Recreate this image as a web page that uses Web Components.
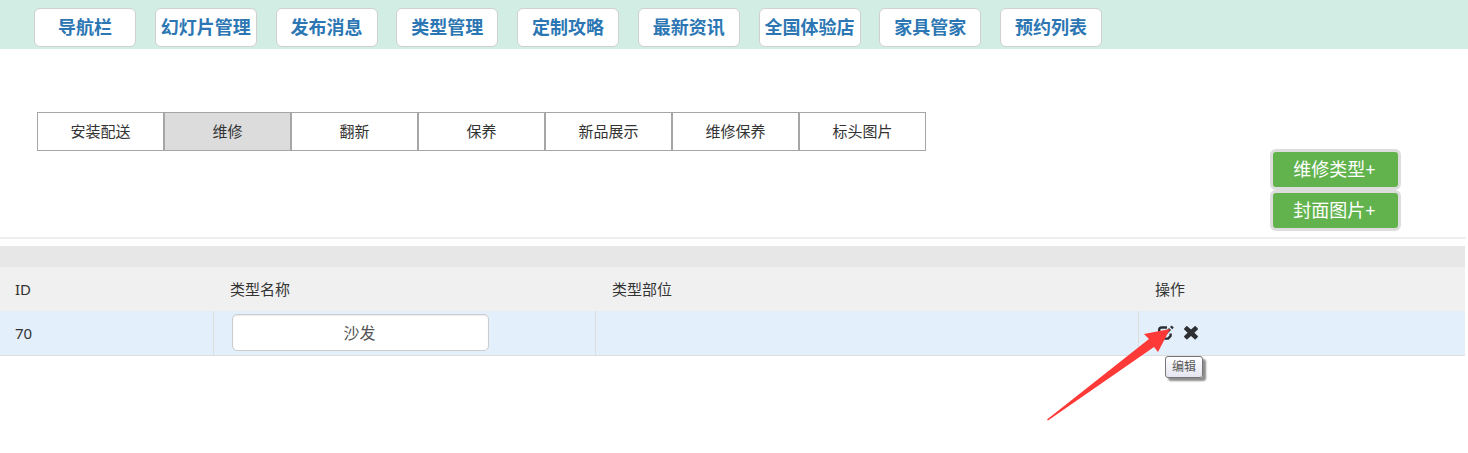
<!DOCTYPE html>
<html lang="zh-CN">
<head>
<meta charset="utf-8">
<title>维修</title>
<style>
  html { height: 100%; }
  body {
    margin: 0;
    min-height: 100vh;
    background: #fff;
    color: #333;
    font: 15px/20px "Noto Sans", "Noto Sans CJK SC", sans-serif;
  }
</style>
</head>
<body>
<admin-page></admin-page>

<script>
class NavButton extends HTMLElement {
  constructor() {
    super();
    this.attachShadow({ mode: "open" });
    this.shadowRoot.innerHTML = `
      <style>
        :host { display: block; width: 102px; }
        a {
          display: block;
          box-sizing: border-box;
          height: 39px;
          border: 1px solid #d0d0d0;
          border-radius: 6px;
          background: #fff;
          color: #2c77b3;
          font-size: 18px;
          font-weight: bold;
          line-height: 36px;
          text-align: center;
          text-decoration: none;
          white-space: nowrap;
        }
      </style>
      <a href="#"><slot></slot></a>
    `;
  }
}
customElements.define("nav-button", NavButton);

class TopNav extends HTMLElement {
  constructor() {
    super();
    this.attachShadow({ mode: "open" });
    this.shadowRoot.innerHTML = `
      <style>
        :host { display: block; background: #d1ede4; padding: 8px 34px 2px; }
        nav {
          display: flex;
          justify-content: space-between;
          max-width: 1068px;
        }
      </style>
      <nav><slot></slot></nav>
    `;
  }
}
customElements.define("top-nav", TopNav);

class TabItem extends HTMLElement {
  constructor() {
    super();
    this.attachShadow({ mode: "open" });
    this.shadowRoot.innerHTML = `
      <style>
        :host { display: block; width: 127px; }
        button {
          display: block;
          width: 100%;
          height: 39px;
          margin: 0;
          padding: 0 0 2px;
          border: 1px solid #a7a5a6;
          background: #fff;
          color: inherit;
          font: inherit;
          cursor: pointer;
        }
        :host([active]) button { background: #dcdcdc; }
      </style>
      <button type="button"><slot></slot></button>
    `;
  }
}
customElements.define("tab-item", TabItem);

class TabBar extends HTMLElement {
  constructor() {
    super();
    this.attachShadow({ mode: "open" });
    this.shadowRoot.innerHTML = `
      <style>
        :host { display: flex; padding: 63px 37px 0; }
      </style>
      <slot></slot>
    `;
  }
}
customElements.define("tab-bar", TabBar);

class AddButton extends HTMLElement {
  constructor() {
    super();
    this.attachShadow({ mode: "open" });
    this.shadowRoot.innerHTML = `
      <style>
        :host { display: block; width: 131px; }
        button {
          display: block;
          width: 100%;
          height: 41px;
          margin: 0;
          padding: 0 2px 2px 0;
          border: 3px solid #ddd;
          border-radius: 6px;
          background: #62b34e;
          color: #fff;
          font: inherit;
          font-size: 18px;
          cursor: pointer;
        }
      </style>
      <button type="button"><slot></slot></button>
    `;
  }
}
customElements.define("add-button", AddButton);

class HintTip extends HTMLElement {
  constructor() {
    super();
    this.attachShadow({ mode: "open" });
    this.shadowRoot.innerHTML = `
      <style>
        :host {
          display: block;
          box-sizing: border-box;
          padding: 0 6px;
          border: 1px solid #767676;
          border-radius: 3px;
          background: linear-gradient(#fff, #e4e5f0);
          box-shadow: 3px 3px 2px rgba(0, 0, 0, 0.45);
          color: #575757;
          font-size: 12px;
          line-height: 20px;
          white-space: nowrap;
        }
      </style>
      <slot></slot>
    `;
  }
}
customElements.define("hint-tip", HintTip);

class RowActions extends HTMLElement {
  constructor() {
    super();
    this.attachShadow({ mode: "open" });
    this.shadowRoot.innerHTML = `
      <style>
        :host { display: flex; gap: 10px; position: relative; }
        button {
          display: block;
          width: 16px;
          height: 16px;
          margin: 0;
          padding: 0;
          border: 0;
          background: none;
          color: #2d2f33;
          cursor: pointer;
        }
        svg { display: block; }
        hint-tip { position: absolute; left: 8px; top: 31px; }
        /* pointer laid over the row, its tip on the edit icon */
        .arrow { position: absolute; left: -111px; top: 3px; pointer-events: none; }
      </style>
      <button type="button" aria-label="编辑">
        <svg width="17" height="16" viewBox="0 0 17 16" fill="none" stroke="currentColor">
          <path d="M10 2.5H4.5Q2.2 2.5 2.2 4.8V10.8L4.8 13.6H11L13.6 11V8.6" stroke-width="2.4" stroke-linejoin="round"/>
          <path d="M6 11L7 8L12 3L14 5L9 10Z" fill="currentColor" stroke="none"/>
          <path d="M13.8 1.2L16 3.4" stroke-width="2.2"/>
        </svg>
      </button>
      <button type="button" aria-label="删除">
        <svg width="16" height="16" viewBox="0 0 16 16" fill="currentColor">
          <path d="M4.3 1.3L8 4.6L11.7 1.3Q12.2.9 12.7 1.3L14.8 3.4Q15.2 3.9 14.8 4.4L11.4 7.7L14.8 11.1Q15.2 11.6 14.8 12.1L12.7 14.2Q12.2 14.6 11.7 14.2L8 10.9L4.3 14.2Q3.8 14.6 3.3 14.2L1.2 12.1Q.8 11.6 1.2 11.1L4.6 7.7L1.2 4.4Q.8 3.9 1.2 3.4L3.3 1.3Q3.8.9 4.3 1.3Z"/>
        </svg>
      </button>
      <hint-tip>编辑</hint-tip>
      <svg class="arrow" width="126" height="94" viewBox="0 0 126 94" aria-hidden="true">
        <path d="M124 1L98 6L103 11L1 91.5L2 92.5L108 19L112 24Z" fill="#fd3a38"/>
      </svg>
    `;
  }
}
customElements.define("row-actions", RowActions);

class TypeTable extends HTMLElement {
  constructor() {
    super();
    this.attachShadow({ mode: "open" });
    this.shadowRoot.innerHTML = `
      <style>
        :host {
          display: block;
          margin: 7px 3px 0 0;
          border-top: 21px solid #e7e7e7;
        }
        table {
          width: 100%;
          table-layout: fixed;
          border-collapse: separate;
          border-spacing: 0;
        }
        .id { width: 214px; }
        .name { width: 382px; }
        .part { width: 543px; }
        th, td {
          box-sizing: border-box;
          height: 44px;
          padding: 0 15px;
          text-align: left;
        }
        th { background: #f0f0f0; font-weight: normal; }
        th + th { padding-left: 16px; }
        td {
          height: 45px;
          border-right: 1px solid #ddd;
          border-bottom: 1px solid #ddd;
          background: #e3effb;
        }
        td:last-child { border-right: 0; padding-left: 18px; }
        td.field { padding: 3px 18px 0; vertical-align: top; }
        input {
          display: block;
          box-sizing: border-box;
          width: 257px;
          height: 37px;
          padding: 0 4px 2px 2px;
          border: 1px solid #ccc;
          border-radius: 5px;
          box-shadow: inset 0 1px 1px rgba(0, 0, 0, 0.08);
          background: #fff;
          color: #555;
          font: inherit;
          font-size: 16px;
          text-align: center;
        }
      </style>
      <table>
        <colgroup><col class="id"><col class="name"><col class="part"><col></colgroup>
        <thead>
          <tr><th>ID</th><th id="name">类型名称</th><th>类型部位</th><th>操作</th></tr>
        </thead>
        <tbody>
          <tr>
            <td>70</td>
            <td class="field"><input type="text" value="沙发" aria-labelledby="name"></td>
            <td></td>
            <td><row-actions></row-actions></td>
          </tr>
        </tbody>
      </table>
    `;
  }
}
customElements.define("type-table", TypeTable);

class AdminPage extends HTMLElement {
  constructor() {
    super();
    this.attachShadow({ mode: "open" });
    this.shadowRoot.innerHTML = `
      <style>
        :host { display: block; }
        .adders {
          display: flex;
          flex-direction: column;
          align-items: flex-end;
          margin-top: -2px;
          padding: 0 67px 6px 0;
        }
        hr { margin: 0 2px 0 0; border: 0; border-top: 2px solid #eee; }
      </style>
      <top-nav>
        <nav-button>导航栏</nav-button>
        <nav-button>幻灯片管理</nav-button>
        <nav-button>发布消息</nav-button>
        <nav-button>类型管理</nav-button>
        <nav-button>定制攻略</nav-button>
        <nav-button>最新资讯</nav-button>
        <nav-button>全国体验店</nav-button>
        <nav-button>家具管家</nav-button>
        <nav-button>预约列表</nav-button>
      </top-nav>
      <tab-bar>
        <tab-item>安装配送</tab-item>
        <tab-item active>维修</tab-item>
        <tab-item>翻新</tab-item>
        <tab-item>保养</tab-item>
        <tab-item>新品展示</tab-item>
        <tab-item>维修保养</tab-item>
        <tab-item>标头图片</tab-item>
      </tab-bar>
      <div class="adders">
        <add-button>维修类型+</add-button>
        <add-button>封面图片+</add-button>
      </div>
      <hr>
      <type-table></type-table>
    `;
  }
}
customElements.define("admin-page", AdminPage);
</script>
</body>
</html>
